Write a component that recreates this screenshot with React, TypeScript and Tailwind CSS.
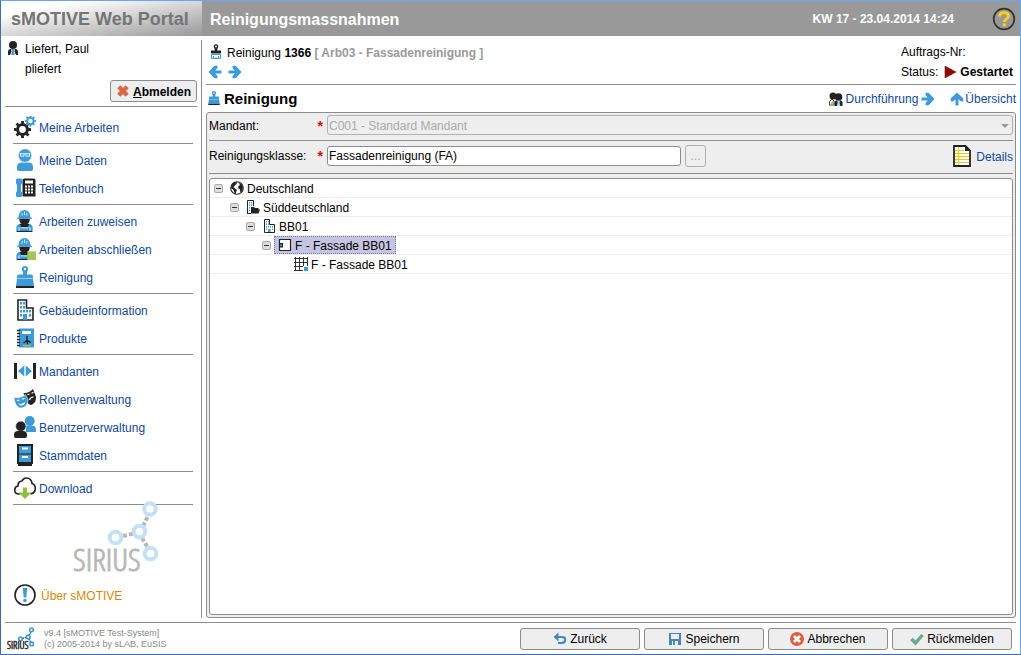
import { useState } from 'react'
import type { ReactNode } from 'react'

const BLUE = '#3d9bd8'
const DARK = '#222222'

function Svg({ size = 22, box = 22, children }: { size?: number; box?: number; children: ReactNode }) {
  return (
    <svg width={size} height={size} viewBox={`0 0 ${box} ${box}`} className="shrink-0" fill="none" aria-hidden="true">
      {children}
    </svg>
  )
}

function Gear({ cx, cy, r, color }: { cx: number; cy: number; r: number; color: string }) {
  return (
    <g stroke={color} transform={`translate(${cx} ${cy})`}>
      <circle r={r * 0.58} strokeWidth={r * 0.36} />
      {[0, 45, 90, 135, 180, 225, 270, 315].map((deg) => (
        <path key={deg} d={`M0 ${-r * 0.7}V${-r}`} strokeWidth={r * 0.34} transform={`rotate(${deg})`} />
      ))}
    </g>
  )
}

const GearsIcon = () => (
  <Svg>
    <Gear cx={8.5} cy={13.5} r={8.5} color={DARK} />
    <Gear cx={16.4} cy={5} r={5.6} color={BLUE} />
  </Svg>
)

const PersonIcon = () => (
  <Svg>
    <path d="M3 20v-2.500c0-2.500 2-4 5-4h6c3 0 5 1.500 5 4V20c0 1.200-.8 2-2 2H5c-1.200 0-2-.8-2-2z" fill={BLUE} />
    <circle cx="11" cy="6.500" r="6.700" fill={BLUE} stroke="#fff" strokeWidth=".5" />
    <path d="M5.500 4.700h11M6.500 4.700v2.500h3.500V4.700M12 4.700v2.500h3.500V4.700" stroke="#e4f2fb" />
  </Svg>
)

const PhoneIcon = () => (
  <Svg>
    <path d="M2 3c0-1 .6-1.500 1.500-1.500h3c1 0 1.500.5 1.500 1.500v3c0 1-1 1.500-1 2.500v5c0 1 1 1.500 1 2.500v2.500c0 1-.6 1.500-1.500 1.500h-3C2.600 20 2 19.500 2 18.500V16c0-1 1-1.500 1-2.500v-5C3 7.500 2 7 2 6z" fill={BLUE} />
    <path d="M8.500 3.500c0-1.300.7-2 2-2h9c1.300 0 2 .7 2 2v16h-13z" fill={DARK} />
    <path d="M11 3.500h8v3h-8z" fill="#fff" />
    <path d="M11 8.500h2v2h-2zM14 8.500h2v2h-2zM17 8.500h2v2h-2zM11 11.500h2v2h-2zM14 11.500h2v2h-2zM17 11.500h2v2h-2zM11 14.500h2v2h-2zM14 14.500h2v2h-2zM17 14.500h2v2h-2z" fill="#fff" />
  </Svg>
)

function WorkerShape() {
  return (
    <>
      <path d="M5.500 9h11c0 4.300-2 6.300-5.500 6.300S5.500 13.300 5.500 9z" fill={DARK} />
      <path d="M4.800 7.500C4.800 3 7.500 0 11 0s6.200 3 6.200 7.500l1.600 1v1.200c-5-1.400-10.600-1.400-15.600 0V8.500z" fill={BLUE} />
      <path d="M8.500 6V3M11 5.500V1.500M13.500 6V3" stroke="#e4f2fb" strokeWidth=".9" />
      <path d="M2.500 23v-4.500c0-2 1.200-3.400 3-3.800h11c1.800.4 3 1.800 3 3.800V23z" fill={BLUE} />
      <path d="M6 14.500h10l-1.500 3.500h-7z" fill={DARK} />
      <path d="M5.300 18v4.500M16.700 18v4.500M7 18.700h8" stroke="#fff" strokeWidth=".9" />
      <path d="M3 22.400h16" stroke={DARK} strokeWidth="1.100" />
    </>
  )
}

const WorkerIcon = () => (
  <Svg box={23}>
    <WorkerShape />
  </Svg>
)

const WorkerDoneIcon = () => (
  <Svg box={23}>
    <WorkerShape />
    <path d="M14 14h9v9h-9z" fill="#a2c55a" />
  </Svg>
)

const BrushIcon = ({ size = 22 }: { size?: number }) => (
  <Svg size={size}>
    <path d="M11 0c2 0 3.200 1.400 3.200 3 0 1.500-1.200 2.500-1.200 4v1.500h4c1.200 0 2 .8 2 2V12.500H3v-2c0-1.200.8-2 2-2h4V7c0-1.500-1.200-2.500-1.200-4C7.800 1.400 9 0 11 0z" fill={BLUE} />
    <circle cx="11" cy="3" r="1.200" fill="#fff" />
    <path d="M3 13h16l1 7H2z" fill={BLUE} />
    <path d="M2 21h18" stroke={DARK} strokeWidth="2" />
  </Svg>
)

const BuildingIcon = () => (
  <Svg>
    <path d="M4 21V1h8.500v8H19v12z" stroke={DARK} strokeWidth="1.600" fill="#fff" />
    <path d="M6 3h2v2.500H6zM9 3h2v2.500H9zM6 7h2v2.500H6zM9 7h2v2.500H9zM6 11h2v2.500H6zM9 11h2v2.500H9zM12 11h2v2.500h-2zM15 11h2v2.500h-2zM6 15h2v2.500H6zM9 15h4v6H9zM15 15h2v2.500h-2z" fill={BLUE} />
  </Svg>
)

const BuildingSmallIcon = () => (
  <Svg size={14} box={14}>
    <path d="M2.500 13.500V.5h5v5h5v8z" stroke={DARK} fill="#fff" />
    <path d="M4 2h1v1.500H4zM6 2h1v1.500H6zM4 4.500h1V6H4zM6 4.500h1V6H6zM4 7h1v1.500H4zM6 7h1v1.500H6zM8 7h1v1.500H8zM10 7h1v1.500h-1zM4 9.500h1V11H4zM6 10h2.500v3H6zM10 9.500h1V11h-1z" fill={BLUE} />
  </Svg>
)

const ProductIcon = () => (
  <Svg>
    <path d="M5 1.500h15v19H5z" fill={BLUE} />
    <path d="M8 4h9v3H8z" fill="#fff" />
    <path d="M3 3.500h3M3 6.500h3M3 9.500h3M3 12.500h3M3 15.500h3M3 18.500h3" stroke={DARK} strokeWidth="1.400" />
    <path d="M13 9v4.500l4 2M13 13.500L9.500 16M13 13.500l.5 4" stroke={DARK} strokeWidth="1.400" />
    <path d="M9 18.500h8" stroke="#a2c55a" strokeWidth="1.400" />
  </Svg>
)

const TenantIcon = () => (
  <Svg>
    <path d="M1.500 3v16M20.500 3v16" stroke={DARK} strokeWidth="3" />
    <path d="M10.300 5.500v11L4 11zM11.700 5.500v11L18 11z" fill={BLUE} />
  </Svg>
)

const MasksIcon = () => (
  <Svg>
    <path d="M9.500 5c3.300.5 6.500-1 9.500-4L22 9c.2 4.500-2 7.500-5.500 8L12 14z" fill={DARK} />
    <path d="M13.500 6.800l2-.8M17.500 5.200l2-1M15.500 12c.5-2 2-3 4-3" stroke="#fff" strokeWidth="1.100" />
    <path d="M0 9.500c4 .8 8-.2 11.500-3l2.500 5c.3 4.500-2.500 8.500-7.500 8.500C2.800 19.500.5 15 0 9.500z" fill={BLUE} stroke="#fff" strokeWidth=".6" />
    <path d="M3 12.500l2.500-.4M8 11.300l2.500-1" stroke="#fff" strokeWidth="1.100" />
    <path d="M4.500 15.800c2.700.4 5-.2 7-2-.6 2.600-2.300 3.800-4.500 3.700-1.200-.2-2-.8-2.500-1.700z" fill="#fff" />
  </Svg>
)

const UsersIcon = () => (
  <Svg>
    <circle cx="15.700" cy="5" r="5" fill={BLUE} />
    <path d="M12 9.500h6.500c2.300.4 3.500 1.800 3.500 4.200V16H12z" fill={BLUE} />
    <circle cx="6.800" cy="10.300" r="5.200" fill={DARK} stroke="#fff" strokeWidth=".6" />
    <path d="M0 20v-1c0-2.500 1.300-4 4-4h5c2.700 0 4 1.500 4 4v1c0 1.200-.6 2-2 2H2c-1.400 0-2-.8-2-2z" fill={DARK} />
  </Svg>
)

const CabinetIcon = () => (
  <Svg>
    <path d="M3 0h16v20h-1v2H4v-2H3z" fill={DARK} />
    <path d="M5 2h12v7.500H5zM5 10.500h12V18H5z" fill={BLUE} />
    <path d="M8 4.500h6M8 13h6" stroke="#fff" strokeWidth="2" />
  </Svg>
)

const DownloadIcon = () => (
  <Svg>
    <path d="M6 17H5c-2.500 0-4.300-1.700-4.300-4 0-2 1.300-3.600 3.300-4C3.800 6 5.500 4 8 4c.8-2 2.500-3 4.500-3C15.500 1 18 3.400 18 6.500c2 .6 3.300 2.400 3.300 4.800 0 3-2 5.200-4.800 5.700" stroke={DARK} strokeWidth="1.600" />
    <path d="M9 10.500h4v5h4.500L11 22l-6.500-6.500H9z" fill="#8fc045" />
  </Svg>
)

const InfoIcon = () => (
  <Svg>
    <circle cx="11" cy="11" r="10" stroke={DARK} strokeWidth="1.600" />
    <path d="M8.800 4h4.400l-.9 9.500H9.700z" fill={BLUE} />
    <circle cx="11" cy="16.500" r="1.800" fill={BLUE} />
  </Svg>
)

const HelpIcon = () => (
  <Svg size={24} box={24}>
    <circle cx="12" cy="12" r="10.300" stroke="#333" strokeWidth="1.700" />
    <path d="M7.500 9.500C7.700 7 9.400 5.700 12 5.700c2.700 0 4.500 1.400 4.500 3.500 0 3-4.200 2.800-4.200 5.800" stroke="#f7cf1c" strokeWidth="2.900" />
    <path d="M10.700 16.500h3.200v3h-3.200z" fill="#f7cf1c" />
  </Svg>
)

const UserSmallIcon = () => (
  <Svg size={14} box={14}>
    <circle cx="7" cy="4" r="4" fill={DARK} />
    <path d="M2 14v-3c0-2 1-3 2.500-3h5C11 8 12 9 12 11v3z" fill={DARK} />
    <path d="M5 8.500h4l-.5 2L10 14H4l1.500-3.500z" fill="#fff" />
    <path d="M6.200 9h1.600l.9 5H5.300z" fill={BLUE} />
  </Svg>
)

const CrossIcon = () => (
  <Svg size={14} box={14}>
    <path d="M2.800 2.800l8.400 8.400M11.200 2.800l-8.400 8.400" stroke="#dd6547" strokeWidth="4.400" />
  </Svg>
)

function ArrowIcon({ dir = 'right' }: { dir?: 'left' | 'right' | 'up' }) {
  const angle = { right: 0, left: 180, up: -90 }[dir]
  return (
    <Svg size={14} box={14}>
      <g transform={`rotate(${angle} 7 7)`}>
        <path d="M.5 5.500h6.200L4.500 3V.8h3.200L13.500 7l-5.800 6.200H4.500V11l2.200-2.500H.5z" fill={BLUE} />
      </g>
    </Svg>
  )
}

const PaintBrushIcon = () => (
  <Svg size={16} box={16}>
    <path d="M8 2v5" stroke={DARK} strokeWidth="2.600" />
    <circle cx="8" cy="2.500" r="2.300" fill={DARK} />
    <circle cx="8" cy="2.400" r=".9" fill="#fff" />
    <path d="M3 6.500h10v3H3z" fill={DARK} />
    <path d="M3.500 10.500h9v4h-9z" fill="#fff" stroke={BLUE} />
    <path d="M5.500 12v3M8 13v2M10.500 12v3" stroke={BLUE} />
  </Svg>
)

const TeamIcon = () => (
  <Svg size={14} box={14}>
    <circle cx="4" cy="4" r="3.500" fill={DARK} />
    <path d="M.5 13V9.500L3 7l2 2v4z" fill="#fff" stroke={DARK} strokeWidth=".9" />
    <path d="M2 10.500l1.500-1.500L5 13H2z" fill="#a2c55a" />
    <circle cx="9.500" cy="5" r="3.800" fill={DARK} />
    <path d="M5.500 14v-3c0-1.500 1-2.500 2-2.500h4c1.200 0 2 1 2 2.500v3z" fill={DARK} />
    <path d="M8 8.800h3.200l-.7 1.500.9 3.700H7.800l.9-3.700z" fill="#a9d6f2" />
  </Svg>
)

const SheetIcon = () => (
  <Svg>
    <path d="M3 1h11.500L19 5.500V21H3z" fill="#fff" stroke={DARK} strokeWidth="1.800" />
    <path d="M14 1v5h5z" fill={DARK} />
    <path d="M4 5.500h9M4 8.500h14M4 11.500h14M4 14.500h14M4 17.500h14M7.500 2v18" stroke="#f0c814" />
  </Svg>
)

const GlobeIcon = () => (
  <Svg size={14} box={14}>
    <circle cx="7" cy="7" r="6.300" fill="#fff" stroke={DARK} strokeWidth="1.100" />
    <path d="M1.500 4.500C2.800 2 4.500 1 7 1L6.500 3 5 4.500 3.500 6l1.500 1.500L7 9l-1 2v2.500C4 12.500 4.500 10 3 8.500L1 7zM8.500 2l3 1L13 6l-.7 4-2 1.500L10 8.500 8 7l.5-2 1.500-1z" fill={DARK} />
  </Svg>
)

const RegionIcon = () => (
  <Svg size={14} box={14}>
    <path d="M1.500 13.500V.5h6V6M1 13.500h4" stroke={DARK} />
    <path d="M3 2h1.200v1.500H3zM5 2h1.200v1.500H5zM3 4.500h1.200V6H3zM5 4.500h1.200V6H5zM3 7h1.200v1.500H3zM3 9.500h1.200V11H3z" fill={BLUE} />
    <path d="M5 13V7h3l1 1h3.500v1.500H14L12.500 13.500H5z" fill={DARK} />
  </Svg>
)

const FloorIcon = () => (
  <Svg size={14} box={14}>
    <path d="M1.500 1.500h11v11h-11z" fill="#fff" stroke={DARK} strokeWidth="1.200" />
    <path d="M1 5h4v4.500H1z" fill={DARK} />
    <path d="M2 6.200h2v2H2z" fill={BLUE} />
  </Svg>
)

const GridIcon = () => (
  <Svg size={14} box={14}>
    <path d="M1.500 0v14M5.500 0v14M9.500 0v9M13.500 0v9M0 1.500h14M0 5.500h14M0 9.500h9M0 13.500h9" stroke="#333" />
    <path d="M10 10h4v4h-4z" fill={BLUE} />
  </Svg>
)

const UndoIcon = () => (
  <Svg size={14} box={14}>
    <path d="M3 5h6c2.300 0 3.200.8 3.200 2.800 0 2.300-1.200 3.200-3.700 3.200H5" stroke="#4a86bd" strokeWidth="2.200" />
    <path d="M5.500.5v9L.5 5z" fill="#4a86bd" />
  </Svg>
)

const SaveIcon = () => (
  <Svg size={14} box={14}>
    <path d="M1 1h12v12H1z" fill="#4a86bd" />
    <path d="M3 2h8v5H3zM4 9h6v4H4z" fill="#eee" />
    <path d="M5 9h2v4H5z" fill="#4a86bd" />
  </Svg>
)

const CancelIcon = () => (
  <Svg size={14} box={14}>
    <circle cx="7" cy="7" r="7" fill="#dd5f40" />
    <path d="M4 4l6 6M10 4l-6 6" stroke="#fff" strokeWidth="2.800" />
  </Svg>
)

const CheckIcon = () => (
  <Svg size={14} box={14}>
    <path d="M1.500 7l4 4L12.500 3" stroke="#6ba792" strokeWidth="3.400" />
  </Svg>
)

function SiriusLogo({ small = false }: { small?: boolean }) {
  const ring = small ? BLUE : '#c3e0f4'
  const ink = small ? '#333' : '#b8b8b8'
  return (
    <svg
      width={small ? 28 : 88}
      height={small ? 24 : 74}
      viewBox="0 0 88 74"
      fill="none"
      overflow="visible"
      role="img"
      aria-label="SIRIUS"
    >
      <path d="M50 35l11-2.500M70 25l5-10M69 37l6 10" stroke={ink} strokeWidth="4" strokeDasharray="4 2" />
      <g stroke={ring} strokeWidth={small ? 5 : 4}>
        <circle cx="42.500" cy="36.500" r="5.800" />
        <circle cx="66.500" cy="30.500" r="5.800" />
        <circle cx="77" cy="8" r="5.800" />
        <circle cx="77.500" cy="52.500" r="5.800" />
      </g>
      <text
        x="0"
        y="70"
        fill={ink}
        stroke={ink}
        strokeWidth={small ? 2 : 1}
        fontSize="32"
        fontWeight="300"
        fontFamily='"Open Sans Condensed Light", "Roboto Condensed Light", "Roboto Condensed", "Liberation Sans Narrow", "Open Sans Condensed", sans-serif'
      >
        SIRIUS
      </text>
    </svg>
  )
}

interface NavItem {
  label: string
  icon: ReactNode
}

const navGroups: NavItem[][] = [
  [{ label: 'Meine Arbeiten', icon: <GearsIcon /> }],
  [
    { label: 'Meine Daten', icon: <PersonIcon /> },
    { label: 'Telefonbuch', icon: <PhoneIcon /> },
  ],
  [
    { label: 'Arbeiten zuweisen', icon: <WorkerIcon /> },
    { label: 'Arbeiten abschließen', icon: <WorkerDoneIcon /> },
    { label: 'Reinigung', icon: <BrushIcon /> },
  ],
  [
    { label: 'Gebäudeinformation', icon: <BuildingIcon /> },
    { label: 'Produkte', icon: <ProductIcon /> },
  ],
  [
    { label: 'Mandanten', icon: <TenantIcon /> },
    { label: 'Rollenverwaltung', icon: <MasksIcon /> },
    { label: 'Benutzerverwaltung', icon: <UsersIcon /> },
    { label: 'Stammdaten', icon: <CabinetIcon /> },
  ],
  [{ label: 'Download', icon: <DownloadIcon /> }],
]

interface TreeNode {
  label: string
  icon: ReactNode
  indent: string
  leaf?: boolean
}

const treeNodes: TreeNode[] = [
  { label: 'Deutschland', icon: <GlobeIcon />, indent: 'pl-1' },
  { label: 'Süddeutschland', icon: <RegionIcon />, indent: 'pl-5' },
  { label: 'BB01', icon: <BuildingSmallIcon />, indent: 'pl-9' },
  { label: 'F - Fassade BB01', icon: <FloorIcon />, indent: 'pl-13' },
  { label: 'F - Fassade BB01', icon: <GridIcon />, indent: 'pl-20', leaf: true },
]

function Sidebar() {
  return (
    <aside className="flex w-[201px] shrink-0 flex-col border-r border-[#8c8c8c] pl-1">
      <div className="mr-1 flex flex-col border-b border-[#8c8c8c] pb-1">
        <div className="flex gap-1 pl-px">
          <span className="pt-px">
            <UserSmallIcon />
          </span>
          <div className="pl-px leading-5">
            <div className="-mt-px">Liefert, Paul</div>
            <div>pliefert</div>
          </div>
        </div>
        <button
          type="button"
          className="mt-px flex h-[22px] w-[87px] items-center justify-center gap-[3px] self-end rounded-[3px] border border-[#8c8c8c] bg-[#eeeeee] font-bold"
        >
          <CrossIcon />
          <span className="pt-px">
            <u>A</u>bmelden
          </span>
        </button>
      </div>
      <nav className="mr-2 flex flex-col pt-1 pl-2">
        {navGroups.map((group) => (
          <ul key={group[0].label} className="border-b border-[#8c8c8c] py-0.5">
            {group.map((item) => (
              <li key={item.label}>
                <a href="#" className="flex h-7 items-center gap-[3px] pl-px text-[#12479b]">
                  {item.icon}
                  <span className="pt-0.5">{item.label}</span>
                </a>
              </li>
            ))}
          </ul>
        ))}
      </nav>
      <div className="flex flex-1 flex-col justify-between pb-3 pl-[9px]">
        <div className="-mt-1 pl-[59px]">
          <SiriusLogo />
        </div>
        <a href="#" className="flex items-center gap-[5px] text-[#d48a08]">
          <InfoIcon />
          <span className="pt-0.5">Über sMOTIVE</span>
        </a>
      </div>
    </aside>
  )
}

function Tree() {
  const [selected, setSelected] = useState(3)
  return (
    <ul role="tree" aria-label="Objekte" className="flex-1 rounded-[3px] border border-[#8c8c8c] bg-white">
      {treeNodes.map((node, i) => (
        <li
          key={i}
          role="treeitem"
          aria-selected={i === selected}
          className={`flex h-[19px] items-center border-b border-[#ececec] ${node.indent}`}
        >
          {!node.leaf && (
            <button
              type="button"
              aria-label={`${node.label} zuklappen`}
              className="mr-[3px] flex size-[9px] items-center justify-center rounded-[2px] border border-[#aaaaaa] bg-[#dddddd]"
            >
              <span className="h-px w-[5px] bg-[#333333]" />
            </button>
          )}
          <button
            type="button"
            onClick={() => setSelected(i)}
            className={`flex h-[18px] items-center gap-[3px] border border-dotted px-[3px] ${
              i === selected ? 'border-[#7777aa] bg-[#c5c5e2]' : 'border-transparent'
            }`}
          >
            {node.icon}
            <span className="pt-px">{node.label}</span>
          </button>
        </li>
      ))}
    </ul>
  )
}

function Required() {
  return <span className="text-sm leading-4 font-bold text-red-600">*</span>
}

function MassnahmeForm() {
  return (
    <form className="flex flex-1 flex-col rounded-[3px] border border-[#8c8c8c] bg-[#eeeeee] p-0.5">
      <div className="flex items-start border-b border-[#8c8c8c] pb-[5px]">
        <label htmlFor="mandant" className="flex h-5 w-[118px] items-center justify-between pt-px pr-1">
          Mandant: <Required />
        </label>
        <div className="relative flex-1">
          <select
            id="mandant"
            disabled
            className="block h-5 w-full appearance-none rounded-[3px] border border-[#b0b0b0] bg-[#eeeeee] px-px pt-px text-[#aaaaaa] opacity-100"
          >
            <option>C001 - Standard Mandant</option>
          </select>
          <svg width="8" height="4" viewBox="0 0 8 4" className="pointer-events-none absolute top-[9px] right-1" aria-hidden="true">
            <path d="M0 0h8L4 4z" fill="#999" />
          </svg>
        </div>
      </div>
      <div className="flex items-center border-b border-[#8c8c8c] pt-1 pb-[6px]">
        <label htmlFor="klasse" className="flex h-[22px] w-[118px] items-center justify-between pr-1">
          Reinigungsklasse: <Required />
        </label>
        <input
          id="klasse"
          defaultValue="Fassadenreinigung (FA)"
          className="h-5 w-[354px] rounded-[3px] border border-[#8c8c8c] bg-white px-px"
        />
        <button
          type="button"
          disabled
          aria-label="Reinigungsklasse wählen"
          className="ml-1 h-[22px] w-[21px] rounded-[3px] border border-[#b0b0b0] text-[#aaaaaa]"
        >
          ...
        </button>
        <a href="#" className="ml-auto flex items-center gap-[3px] text-[#12479b]">
          <SheetIcon />
          <span className="pt-0.5">Details</span>
        </a>
      </div>
      <div className="flex flex-1 flex-col pt-1">
        <Tree />
      </div>
    </form>
  )
}

const actions: NavItem[] = [
  { label: 'Zurück', icon: <UndoIcon /> },
  { label: 'Speichern', icon: <SaveIcon /> },
  { label: 'Abbrechen', icon: <CancelIcon /> },
  { label: 'Rückmelden', icon: <CheckIcon /> },
]

export default function App() {
  return (
    <div className="flex min-h-screen flex-col border border-t-[#69a5f0] border-r-[#69a5f0] border-b-[#3b6ea8] border-l-[#3b6ea8] bg-white font-['Liberation_Sans',Arial,sans-serif] text-xs text-black">
      <header className="flex h-[35px] items-center bg-[#999999] font-bold">
        <div className="flex h-full w-[201px] items-center bg-linear-to-br from-white from-20% to-[#999999] pl-[10px] text-lg text-[#757575]">
          sMOTIVE Web Portal
        </div>
        <h1 className="flex-1 pt-0.5 pl-2 text-base text-white">Reinigungsmassnahmen</h1>
        <span className="text-white">KW 17 - 23.04.2014 14:24</span>
        <button type="button" aria-label="Hilfe" className="mr-1 ml-[38px]">
          <HelpIcon />
        </button>
      </header>

      <div className="flex flex-1 py-1">
        <Sidebar />
        <main className="flex min-w-0 flex-1 flex-col px-1 pt-0.5">
          <div className="flex justify-between border-b border-[#8c8c8c] pb-0.5 leading-5">
            <div>
              <div className="flex h-5 items-center gap-[3px] pl-0.5">
                <PaintBrushIcon />
                <span className="pt-px">
                  Reinigung <b>1366</b> <b className="text-[#999999]">[ Arb03 - Fassadenreinigung ]</b>
                </span>
              </div>
              <div className="flex h-5 items-center gap-1.5 pl-0.5">
                <button type="button" aria-label="Zurück blättern">
                  <ArrowIcon dir="left" />
                </button>
                <button type="button" aria-label="Vor blättern">
                  <ArrowIcon />
                </button>
              </div>
            </div>
            <div className="pr-[3px]">
              <div>Auftrags-Nr:</div>
              <div className="flex items-center">
                Status:
                <svg width="12" height="12" viewBox="0 0 12 12" className="mr-1 ml-1.5" aria-hidden="true">
                  <path d="M1 0l11 6L1 12z" fill="#990000" stroke="#333" strokeWidth=".6" />
                </svg>
                <b>Gestartet</b>
              </div>
            </div>
          </div>
          <div className="flex h-[27px] items-center">
            <h2 className="flex flex-1 items-center gap-[3px] pl-px text-[15px] font-bold">
              <BrushIcon size={14} />
              <span className="pt-px">Reinigung</span>
            </h2>
            <a href="#" className="flex items-center gap-[3px] text-[#12479b]">
              <TeamIcon />
              Durchführung
              <ArrowIcon />
            </a>
            <a href="#" className="ml-[15px] flex items-center gap-px text-[#12479b]">
              <ArrowIcon dir="up" />
              Übersicht
            </a>
          </div>
          <MassnahmeForm />
        </main>
      </div>

      <footer className="mx-1 flex h-8 items-center border-t border-[#8c8c8c] pr-1">
        <div className="pl-0.5">
          <SiriusLogo small />
        </div>
        <div className="pl-[9px] text-[9px] leading-[11px] text-[#888888]">
          <div>v9.4 [sMOTIVE Test-System]</div>
          <div>(c) 2005-2014 by sLAB, EuSIS</div>
        </div>
        <div className="ml-auto flex gap-1">
          {actions.map((action) => (
            <button
              key={action.label}
              type="button"
              className="flex h-[22px] w-[120px] items-center justify-center gap-[3px] rounded-[3px] border border-[#8c8c8c] bg-[#eeeeee]"
            >
              {action.icon}
              {action.label}
            </button>
          ))}
        </div>
      </footer>
    </div>
  )
}
